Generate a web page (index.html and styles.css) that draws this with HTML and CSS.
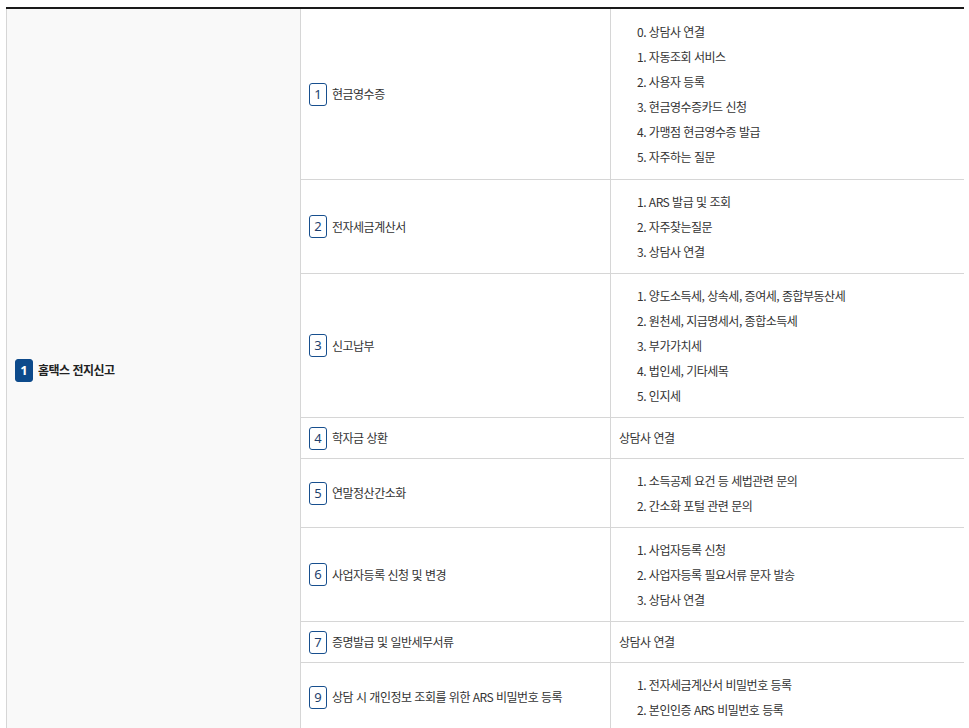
FILE: index.html
```html
<!DOCTYPE html>
<html lang="ko">
<head>
<meta charset="utf-8">
<title>ARS 안내</title>
<link rel="stylesheet" href="styles.css">
</head>
<body>
<div class="wrap">
<table class="ars">
  <colgroup>
    <col class="c1">
    <col class="c2">
    <col class="c3">
  </colgroup>
  <tbody>
    <tr class="first">
      <td class="cat" rowspan="8"><div class="label"><span class="num solid">1</span><span class="cat-name">홈택스 전지신고</span></div></td>
      <td class="menu"><div class="label"><span class="num">1</span><span>현금영수증</span></div></td>
      <td class="sub">
        <ul>
          <li>0. 상담사 연결</li>
          <li>1. 자동조회 서비스</li>
          <li>2. 사용자 등록</li>
          <li>3. 현금영수증카드 신청</li>
          <li>4. 가맹점 현금영수증 발급</li>
          <li>5. 자주하는 질문</li>
        </ul>
      </td>
    </tr>
    <tr>
      <td class="menu"><div class="label"><span class="num">2</span><span>전자세금계산서</span></div></td>
      <td class="sub">
        <ul>
          <li>1. ARS 발급 및 조회</li>
          <li>2. 자주찾는질문</li>
          <li>3. 상담사 연결</li>
        </ul>
      </td>
    </tr>
    <tr>
      <td class="menu"><div class="label"><span class="num">3</span><span>신고납부</span></div></td>
      <td class="sub">
        <ul>
          <li>1. 양도소득세, 상속세, 증여세, 종합부동산세</li>
          <li>2. 원천세, 지급명세서, 종합소득세</li>
          <li>3. 부가가치세</li>
          <li>4. 법인세, 기타세목</li>
          <li>5. 인지세</li>
        </ul>
      </td>
    </tr>
    <tr>
      <td class="menu"><div class="label"><span class="num">4</span><span>학자금 상환</span></div></td>
      <td class="sub plain">상담사 연결</td>
    </tr>
    <tr>
      <td class="menu"><div class="label"><span class="num">5</span><span>연말정산간소화</span></div></td>
      <td class="sub">
        <ul>
          <li>1. 소득공제 요건 등 세법관련 문의</li>
          <li>2. 간소화 포털 관련 문의</li>
        </ul>
      </td>
    </tr>
    <tr>
      <td class="menu"><div class="label"><span class="num">6</span><span>사업자등록 신청 및 변경</span></div></td>
      <td class="sub">
        <ul>
          <li>1. 사업자등록 신청</li>
          <li>2. 사업자등록 필요서류 문자 발송</li>
          <li>3. 상담사 연결</li>
        </ul>
      </td>
    </tr>
    <tr>
      <td class="menu"><div class="label"><span class="num">7</span><span>증명발급 및 일반세무서류</span></div></td>
      <td class="sub plain">상담사 연결</td>
    </tr>
    <tr>
      <td class="menu"><div class="label"><span class="num">9</span><span>상담 시 개인정보 조회를 위한 ARS 비밀번호 등록</span></div></td>
      <td class="sub">
        <ul>
          <li>1. 전자세금계산서 비밀번호 등록</li>
          <li>2. 본인인증 ARS 비밀번호 등록</li>
        </ul>
      </td>
    </tr>
  </tbody>
</table>
</div>
</body>
</html>
```

FILE: styles.css
```css
html, body {
  margin: 0;
  padding: 0;
  background: #ffffff;
}

.wrap {
  padding: 7px 6px 0 6px;
}

.ars {
  width: 957px;
  table-layout: fixed;
  border-collapse: collapse;
  border-top: 2px solid #1a1a1a;
  font-family: "Noto Sans CJK KR", "Noto Sans", sans-serif;
  font-size: 12px;
  letter-spacing: -0.5px;
  color: #333333;
}

.c1 { width: 294px; }
.c2 { width: 310px; }
.c3 { width: 353px; }

.ars td {
  border: 1px solid #d6d6d6;
  border-top: none;
  padding: 9px 8px;
  vertical-align: middle;
  line-height: 22px;
}

.ars .first td.sub {
  padding-top: 10px;
  padding-bottom: 10px;
}

.ars td.sub {
  border-right: none;
}

.cat {
  background: #f9f9f9;
}

.label {
  display: flex;
  align-items: center;
  height: 22px;
  white-space: nowrap;
}

.cat-name {
  font-weight: bold;
  color: #222222;
}

.num {
  display: inline-flex;
  align-items: center;
  justify-content: center;
  flex: none;
  box-sizing: border-box;
  width: 18px;
  height: 23px;
  margin-right: 5px;
  border: 1.5px solid #174f8e;
  border-radius: 3px;
  color: #1d3f6e;
  font-family: "Noto Sans", "Liberation Sans", sans-serif;
  font-size: 13px;
  letter-spacing: 0;
  line-height: 1;
}

.num.solid {
  background: #0d4a8b;
  border-color: #0d4a8b;
  color: #ffffff;
  font-weight: bold;
}

.sub ul {
  list-style: none;
  margin: 0;
  padding: 0 0 0 18px;
}

.sub li {
  line-height: 25px;
}
```
